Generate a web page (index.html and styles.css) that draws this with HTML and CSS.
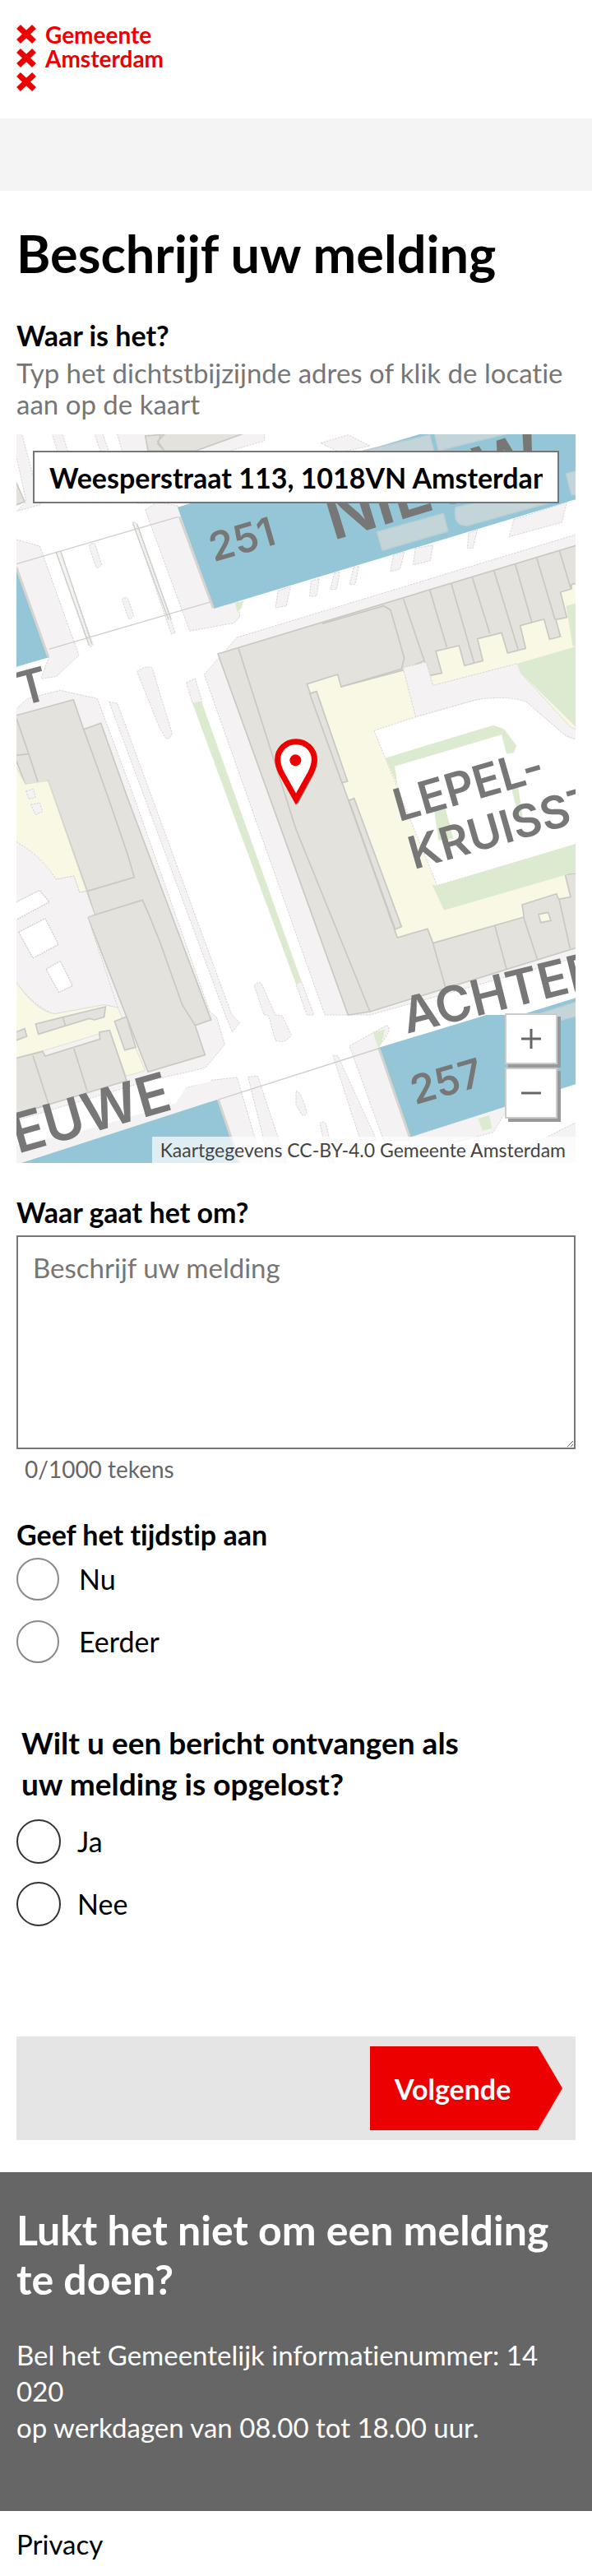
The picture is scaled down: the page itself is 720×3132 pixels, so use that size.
FILE: index.html
```html
<!DOCTYPE html>
<html lang="nl">
<head>
<meta charset="utf-8">
<meta name="viewport" content="width=device-width, initial-scale=1">
<title>Beschrijf uw melding</title>
<link rel="stylesheet" href="styles.css">
</head>
<body>
<header class="header">
  <a class="logo" href="#">
    <svg class="logo-crosses" viewBox="0 0 24 84" aria-hidden="true">
      <g fill="none" stroke="#ec0000" stroke-width="7">
        <path d="M2.500 4.500l19 18M21.500 4.500l-19 18"/>
        <path d="M2.500 33.500l19 18M21.500 33.500l-19 18"/>
        <path d="M2.500 62.500l19 18M21.500 62.500l-19 18"/>
      </g>
    </svg>
    <span class="logo-text">Gemeente<br>Amsterdam</span>
  </a>
</header>
<div class="band"></div>
<main class="main">
  <h1 class="title">Beschrijf uw melding</h1>
  <form class="form">
    <section class="field">
      <label class="label" for="address">Waar is het?</label>
      <p class="hint">Typ het dichtstbijzijnde adres of klik de locatie aan op de kaart</p>
      <div class="map">
        <svg class="map-canvas" viewBox="60 24 2040 2658" preserveAspectRatio="xMidYMid slice" aria-hidden="true">
          <rect x="60" y="24" width="2040" height="2658" fill="#fff"/>
          <!-- pavements -->
          <g class="pave">
            <path d="M50 10H76L150 280L60 305L96 270L50 60zM186 10H224L300 260H262zM340 10H370L420 150H390zM424 10H540L620 276H500z"/>
            <path d="M910 10H965V48L820 90H700zM1170 56L1270 26L1350 66L1240 90z"/>
            <path d="M50 405L145 432L288 830L205 908L150 915L178 838L50 480z"/>
            <path d="M530 300L575 272L650 285L780 655L870 635L875 690L855 712L692 742z"/>
            <path d="M205 455L220 450L340 792L330 800zM485 345L495 345L640 748L625 752z"/>
            <path d="M325 432Q335 416 347 425L371 500Q360 515 350 508zM445 627Q456 612 467 625L488 685Q478 702 468 695z"/>
            <path d="M500 890Q530 866 555 876L628 1115Q620 1140 605 1133L580 1090zM680 930L712 915L738 1000L702 1005z"/>
            <path d="M1015 595L1060 580L1045 650L1005 657zM1135 560L1165 550L1155 615H1130zM1220 530L1240 525L1228 590H1205zM1290 510L1310 505L1295 572H1275zM1435 465L1475 452L1460 515L1425 525zM1515 440L1580 428L1570 485L1508 500zM1710 385L1742 372L1725 440H1705zM1875 335L2068 272L2050 345L1858 398z"/>
            <path d="M865 765L2110 387V1930L1350 2142H1185L745 900z"/>
            <path d="M50 1035L100 988L220 958L355 988L490 1350L765 2130L790 2150L820 2250L750 2335L530 2385L50 2530z"/>
            <path d="M398 1000L428 1005L845 2140L875 2170L848 2205L825 2150z"/>
            <path d="M1080 2030L1100 2020L1145 2142H1120zM928 2035Q940 2015 955 2030L1005 2142L1030 2145L1063 2215Q1040 2250 1005 2235L980 2145L962 2140z"/>
            <path d="M50 2600L240 2500L570 2430L690 2405L770 2380L865 2370L960 2690H50z"/>
            <path d="M905 2368L940 2365L1048 2690H985z"/>
            <path d="M1275 2255L1410 2180Q1432 2190 1405 2225L1380 2262L1500 2600H1400zM1215 2290H1232L1375 2600H1315z"/>
            <path d="M1080 2420Q1100 2420 1120 2500Q1112 2515 1100 2505L1080 2470zM1167 2538Q1178 2525 1190 2540L1220 2682H1200z"/>
            <path d="M1490 2590L1860 2470L1800 2570L1500 2650zM1990 2590L2110 2530V2690H1790z"/>
          </g>
          <!-- streets next to the canals -->
          <path d="M50 2540L540 2395L750 2335L770 2385L680 2405L640 2465L300 2565L50 2620z" fill="#fff"/>
          <path d="M1430 2142L2110 1935V2050L1775 2142L1420 2245z" fill="#fff"/>
          <!-- water -->
          <g class="water">
            <path d="M648 290L1530 24H2100V262L780 660z"/>
            <path d="M50 490L178 838L50 875z"/>
            <path d="M78 2682L795 2450L876 2682z"/>
            <path d="M1380 2262L1775 2142H1900L2100 2080V2395L1495 2588z"/>
          </g>
          <g class="boat">
            <path d="M1375 380L1618 312L1635 378L1395 448zM1325 84L1568 26L1585 90H1325zM1582 10H1900L1600 84zM2065 168L2110 155V245H2085zM1662 290Q1650 360 1705 358L2020 270L1900 240zM1960 2140L2110 2092V2145L2045 2162z"/>
          </g>
          <path d="M655 325L778 658M60 510L176 835M796 2450L875 2682M1383 2265L1495 2588" stroke="#d6d4ce" stroke-width="9" fill="none"/>
          <path class="rail" d="M60 497L650 325M178 808L770 635M205 455L325 795M222 452L335 790M485 350L615 700M500 350L625 700M800 2450L1380 2265"/>
          <!-- buildings -->
          <g class="building">
            <path d="M50 180L90 270L50 285zM530 30L600 24L575 50L600 84H540zM590 10H920L715 84H600L576 60z"/>
            <path d="M795 825L2110 427V1895L1350 2130L1270 2142z"/>
            <path d="M50 1052L268 992L305 1100L368 1078L465 1350L770 2160L712 2180L748 2288L540 2350L320 1785L345 1775L318 1690L175 1288L140 1298L92 1300L50 1190z"/>
          </g>
          <!-- inner courtyard -->
          <path class="yard" d="M1120 935L1232 900L1245 945L1470 885L1548 850L1565 905L1612 895L1590 815L1675 795L1695 868L1762 850L1742 770L1830 748L1852 822L1918 805L1898 722L1985 698L2005 772L2045 762L2028 700L2068 692L2045 600L2085 588V572L2110 566V1625L2062 1630L2082 1712L2038 1720L2030 1700L1905 1740L1912 1785L1580 1880L1560 1828L1450 1860z"/>
          <path class="pave-solid" d="M1470 875L1555 855L1580 940L1888 860L1900 895L2080 1090L2110 1105V1140L2065 1125L1920 1000L1830 985L1740 992L1517 1055z"/>
          <path d="M1365 1105L1517 1055L1740 992Q1850 975 1920 1000L2065 1125L2110 1140V1518L1595 1670z" fill="#fff" stroke="#d8d5d5" stroke-width="3" stroke-dasharray="7 4"/>
          <g class="green">
            <path d="M1888 860L2110 796V1100L1900 895zM2065 650L2110 638V798H2090z"/>
            <path d="M1577 1668L1595 1670L2110 1515V1618L1620 1760z"/>
            <path d="M1405 1205L1800 1085L1840 1100L1885 1160L1875 1185L1848 1190L1830 1120L1440 1235L1452 1310L1435 1270z"/>
            <path d="M1585 1400L1625 1390L1655 1500L1600 1505zM1865 1310L1890 1305L1910 1440L1895 1430z"/>
            <path d="M702 1005L735 998L1100 2020L1080 2030zM858 640L888 632L880 660L865 672z"/>
            <path d="M1360 2205L1405 2195L1390 2250L1380 2260zM1745 2520L1785 2508L1795 2555L1760 2565z"/>
          </g>
          <g class="edge">
            <path d="M870 805L1080 1465L1350 2130M1175 715L1400 650L1425 665L1475 840L1465 880L1243 945M1472 625L1548 850M1568 592L1630 800M1647 570L1730 858M1723 545L1787 750M1802 520L1890 808M1880 497L1940 708M1958 474L2025 700M2042 450L2082 585"/>
            <path d="M1580 1882L1625 2040M1805 1815L1848 1975M1910 1785L1960 1938M2040 1720L2080 1900"/>
            <path d="M305 1100L345 1210L395 1350L465 1555L490 1640L320 1690M320 1785L520 1723L545 1780L585 1880L665 2105L712 2180M60 1060L105 1190L140 1298M60 1195L105 1190"/>
          </g>
          <g class="building">
            <path d="M1130 970L1155 962L1268 1290L1248 1295zM1273 1360L1292 1352L1465 1820L1442 1830z"/>
            <path class="yard" d="M1965 1775L2000 1768L2010 1798L1973 1805z"/>
          </g>
          <!-- gardens on the left -->
          <path class="yard plain" d="M50 1220L92 1300L175 1288L315 1690L290 1695L270 1635L205 1648L50 1510z"/>
          <path class="pave-solid" d="M50 1505Q150 1560 205 1648L270 1635L290 1695L315 1692L345 1775L320 1785L430 2115L380 2105L200 2138Q130 2120 50 2010z"/>
          <path class="yard plain" d="M50 2010Q130 2130 200 2138L380 2105L430 2115L530 2345L460 2365L400 2200L50 2305z"/>
          <g class="plot">
            <path d="M50 1735L145 1687L180 1730L50 1800zM68 1840L165 1790L213 1885L120 1935zM168 1975L220 1945L265 2035L215 2060z"/>
            <path class="pave-solid" d="M95 1325L122 1318L130 1348L105 1355zM112 1375L145 1368L155 1400L130 1412z"/>
          </g>
          <g class="building">
            <path d="M130 2175L230 2150L385 2112L380 2150L345 2160L325 2155L140 2212zM50 2208L90 2192L98 2220L50 2238zM418 2165L462 2148L495 2260L455 2270z"/>
            <path d="M50 2302L155 2275L165 2292L365 2230L362 2205L400 2198L462 2382L50 2508z"/>
            <path d="M120 2290L178 2470M270 2265L318 2420M230 2150L238 2180"/>
          </g>
          <!-- street and block names -->
          <g class="names">
            <text font-size="240" transform="translate(1215 412) rotate(-17)">NIEUW</text>
            <text font-size="145" transform="translate(780 490) rotate(-16)">251</text>
            <text font-size="145" transform="translate(1515 2470) rotate(-16)">257</text>
            <text font-size="170" text-anchor="middle" transform="translate(133 1002) rotate(-15)">T</text>
            <text font-size="165" transform="translate(1455 1438) rotate(-16)">LEPEL-</text>
            <text font-size="165" transform="translate(1510 1612) rotate(-16)">KRUISSTR</text>
            <text font-size="180" transform="translate(1485 2210) rotate(-14)">ACHTER</text>
            <text font-size="200" text-anchor="end" transform="translate(635 2485) rotate(-16)">EUWE</text>
          </g>
          <!-- location pin -->
          <path d="M1086 1374L1030 1270Q1014 1236 1014 1212A72 72 0 0 1 1158 1212Q1158 1236 1142 1270z" fill="#777"/>
          <path d="M1080 1355L1026 1258Q1013 1232 1013 1210A67 65 0 0 1 1147 1210Q1147 1232 1134 1258z" fill="#fff" stroke="#ec0000" stroke-width="21"/>
          <circle cx="1078" cy="1213" r="21" fill="#ec0000"/>
        </svg>
        <input class="address" id="address" type="text" value="Weesperstraat 113, 1018VN Amsterdam">
        <div class="zoom">
          <button class="zoom-btn" type="button" aria-label="Inzoomen"><svg viewBox="0 0 24 24" aria-hidden="true"><path d="M0 12H24M12 0V24"/></svg></button>
          <button class="zoom-btn" type="button" aria-label="Uitzoomen"><svg viewBox="0 0 24 24" aria-hidden="true"><path d="M0 12H24"/></svg></button>
        </div>
        <p class="attribution">Kaartgegevens CC-BY-4.0 Gemeente Amsterdam</p>
      </div>
    </section>
    <section class="field">
      <label class="label" for="description">Waar gaat het om?</label>
      <textarea class="description" id="description" placeholder="Beschrijf uw melding"></textarea>
      <p class="counter">0/1000 tekens</p>
    </section>
    <fieldset class="group time">
      <legend class="label">Geef het tijdstip aan</legend>
      <label class="option"><input class="radio" type="radio" name="time">Nu</label>
      <label class="option"><input class="radio" type="radio" name="time">Eerder</label>
    </fieldset>
    <fieldset class="group notify">
      <legend class="question">Wilt u een bericht ontvangen als uw melding is opgelost?</legend>
      <label class="option"><input class="radio" type="radio" name="notify">Ja</label>
      <label class="option"><input class="radio" type="radio" name="notify">Nee</label>
    </fieldset>
    <div class="actions">
      <button class="next" type="submit">Volgende</button>
    </div>
  </form>
</main>
<footer>
  <div class="help">
    <h2 class="help-title">Lukt het niet om een melding te doen?</h2>
    <p class="help-text">Bel het Gemeentelijk informatienummer: 14 020<br>op werkdagen van 08.00 tot 18.00 uur.</p>
  </div>
  <a class="privacy" href="#">Privacy</a>
</footer>
</body>
</html>
```
FILE: styles.css
```css
*, *::before, *::after { box-sizing: border-box; }
body {
  margin: 0;
  background: #fff;
  color: #000;
  font-family: Lato, "Liberation Sans", sans-serif;
  font-size: 34px;
  line-height: 40px;
  font-variant-ligatures: none;
}
h1, h2, p { margin: 0; }
input, textarea, button { font-family: inherit; font-size: 34px; border-radius: 0; }

.header { height: 144px; padding: 28px 20px; }
.logo { display: flex; gap: 11px; color: #ec0000; text-decoration: none; }
.logo-crosses { width: 24px; height: 84px; }
.logo-text { font-size: 28px; line-height: 29px; font-weight: 700; }
.band { height: 88px; background: #f4f4f4; }

.main { padding: 38px 20px 39px; }
.title { font-size: 63px; line-height: 76px; font-weight: 700; }
.form { padding-top: 42px; }
.label { display: block; padding: 0; font-weight: 700; }
.hint { color: #767676; font-size: 33px; line-height: 38px; padding: 6px 0 18px; }

.map { position: relative; aspect-ratio: 340 / 443; overflow: hidden; }
.map-canvas { display: block; width: 100%; height: 100%; }
.pave, .pave-solid { fill: #f5f2f4; stroke: #d6d3d3; stroke-width: 3; stroke-dasharray: 7 4; }
.water { fill: #94c6d7; }
.boat { fill: #c3d5d9; stroke: #b9ced3; stroke-width: 4; }
.rail { fill: none; stroke: #cfcec8; stroke-width: 4; }
.building { fill: #e3e2dd; stroke: #c9c8c2; stroke-width: 5; }
.edge { fill: none; stroke: #c9c8c2; stroke-width: 5; }
.yard { fill: #f9f8e5; stroke: #c9c8c2; stroke-width: 5; }
.yard.plain { stroke: #e2e0d2; stroke-width: 3; }
.green { fill: #dcebcf; }
.plot { fill: #fff; stroke: #d2d0d0; stroke-width: 4; stroke-dasharray: 6 3; }
.names { fill: #777; font-family: Inter, sans-serif; font-weight: 600; }

.address {
  position: absolute;
  top: 20px;
  left: 20px;
  right: 20px;
  width: calc(100% - 40px);
  height: 64px;
  padding: 0 18px;
  border: 2px solid #767676;
  background: #fff;
  color: #000;
  font-weight: 700;
}
.zoom { position: absolute; right: 22px; bottom: 54px; display: grid; gap: 4px; }
.zoom-btn {
  display: grid;
  place-items: center;
  width: 64px;
  height: 62px;
  padding: 0;
  border: 2px solid #ccc;
  background: #fff;
  box-shadow: 4px 4px 0 #999;
}
.zoom-btn svg { width: 24px; height: 24px; fill: none; stroke: #666; stroke-width: 3; }
.attribution {
  position: absolute;
  right: 0;
  bottom: 0;
  padding: 0 12px 0 10px;
  background: rgba(255, 255, 255, 0.7);
  color: #444;
  font-size: 23px;
  line-height: 32px;
}

.field + .field { padding-top: 40px; }
.description {
  display: block;
  width: 100%;
  height: 260px;
  margin-top: 8px;
  padding: 18px;
  border: 2px solid #767676;
  background: #fff;
  font-size: 33px;
  line-height: 38px;
}
.description::placeholder { color: #767676; opacity: 1; }
.counter { padding: 6px 10px; color: #666; font-size: 28px; line-height: 36px; }

.group { margin: 0; padding: 0; border: 0; min-width: 0; }
.group .option { margin-bottom: 24px; }
.option { display: flex; align-items: center; gap: 24px; line-height: 52px; }
.radio {
  appearance: none;
  width: 52px;
  height: 52px;
  margin: 0;
  border: 2px solid #8a8a8a;
  border-radius: 50%;
  background: #fff;
}
.group.time { margin-top: 36px; }
.group .label { padding-bottom: 8px; }
.group.notify { margin-top: 48px; }
.question { padding: 0 120px 18px 6px; font-size: 37px; line-height: 50px; font-weight: 700; }
.notify .radio { width: 54px; height: 54px; border-color: #333; }
.notify .option { gap: 20px; margin-bottom: 22px; line-height: 54px; }

.actions {
  display: flex;
  justify-content: flex-end;
  margin-top: 112px;
  padding: 12px 16px;
  background: #e5e5e5;
}
.next {
  width: 234px;
  height: 102px;
  padding: 0 60px 0 30px;
  border: 0;
  background: #ec0000;
  color: #fff;
  font-weight: 700;
  text-align: left;
  clip-path: polygon(0 0, 204px 0, 100% 50%, 204px 100%, 0 100%);
}

.help { padding: 40px 20px 80px; background: #666; color: #fff; }
.help-title { font-size: 50px; line-height: 60px; font-weight: 700; }
.help-text { padding-top: 40px; font-size: 33px; line-height: 44px; }
.privacy { display: block; padding: 20px; font-size: 33px; color: #000; text-decoration: none; }
```
